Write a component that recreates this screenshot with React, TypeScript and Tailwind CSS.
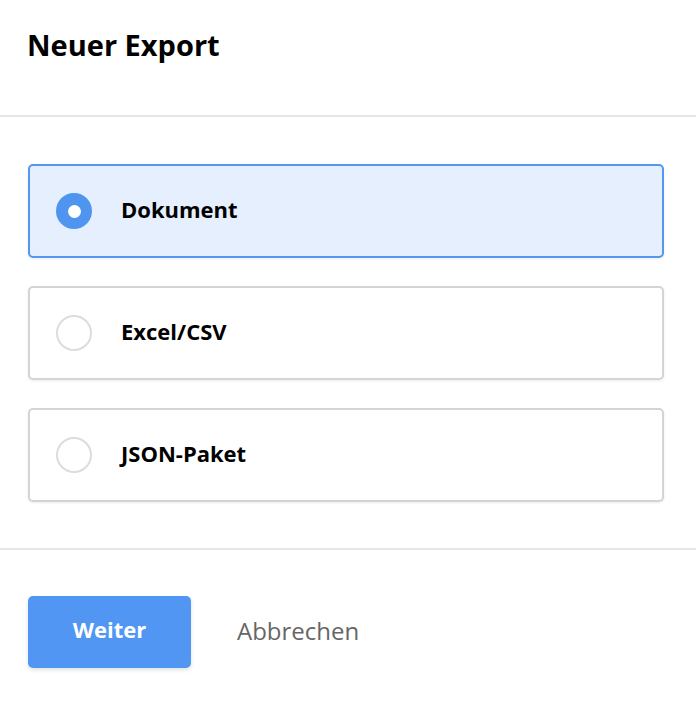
import { useState } from "react";

const OPTIONS = ["Dokument", "Excel/CSV", "JSON-Paket"];

function Radio({ checked }: { checked: boolean }) {
  if (checked) {
    return (
      <span className="flex h-[36px] w-[36px] shrink-0 items-center justify-center rounded-full bg-[#4f94ef]">
        <span className="h-[13px] w-[13px] rounded-full bg-white" />
      </span>
    );
  }
  return <span className="h-[36px] w-[36px] shrink-0 rounded-full border-2 border-[#dcdcdc] bg-white" />;
}

export default function App() {
  const [selected, setSelected] = useState(0);

  return (
    <div className="flex h-[708px] w-[696px] flex-col bg-white font-['Open_Sans','Noto_Sans',sans-serif] text-black">
      <div className="flex h-[115px] items-start px-[27px] pt-[25px]">
        <h1 className="text-[29px] font-bold leading-[40px]">Neuer Export</h1>
      </div>
      <div className="h-[2px] bg-[#e6e6e6]" />

      <div className="flex flex-col gap-[28px] px-[28px] pt-[47px] pb-[46px]">
        {OPTIONS.map((label, i) => {
          const on = i === selected;
          return (
            <button
              key={label}
              onClick={() => setSelected(i)}
              className={
                on
                  ? "flex h-[94px] w-[636px] items-center gap-[29px] rounded-[5px] border-2 border-[#5497f0] bg-[#e5effd] pl-[26px] text-left shadow-[0_1px_3px_rgba(0,0,0,0.08)]"
                  : "flex h-[94px] w-[636px] items-center gap-[29px] rounded-[5px] border-2 border-[#d4d4d4] bg-white pl-[26px] text-left shadow-[0_1px_3px_rgba(0,0,0,0.08)]"
              }
            >
              <Radio checked={on} />
              <span className="pb-[5px] text-[22px] font-bold leading-[30px]">{label}</span>
            </button>
          );
        })}
      </div>

      <div className="h-[2px] bg-[#e6e6e6]" />

      <div className="flex items-center gap-[46px] px-[28px] pt-[46px]">
        <button className="h-[72px] w-[163px] rounded-[5px] bg-[#5096f2] pb-[5px] text-[22px] font-bold text-white shadow-[0_2px_4px_rgba(0,0,0,0.12)]">
          Weiter
        </button>
        <button className="pb-[2px] text-[24px] text-[#666666]">Abbrechen</button>
      </div>
    </div>
  );
}
